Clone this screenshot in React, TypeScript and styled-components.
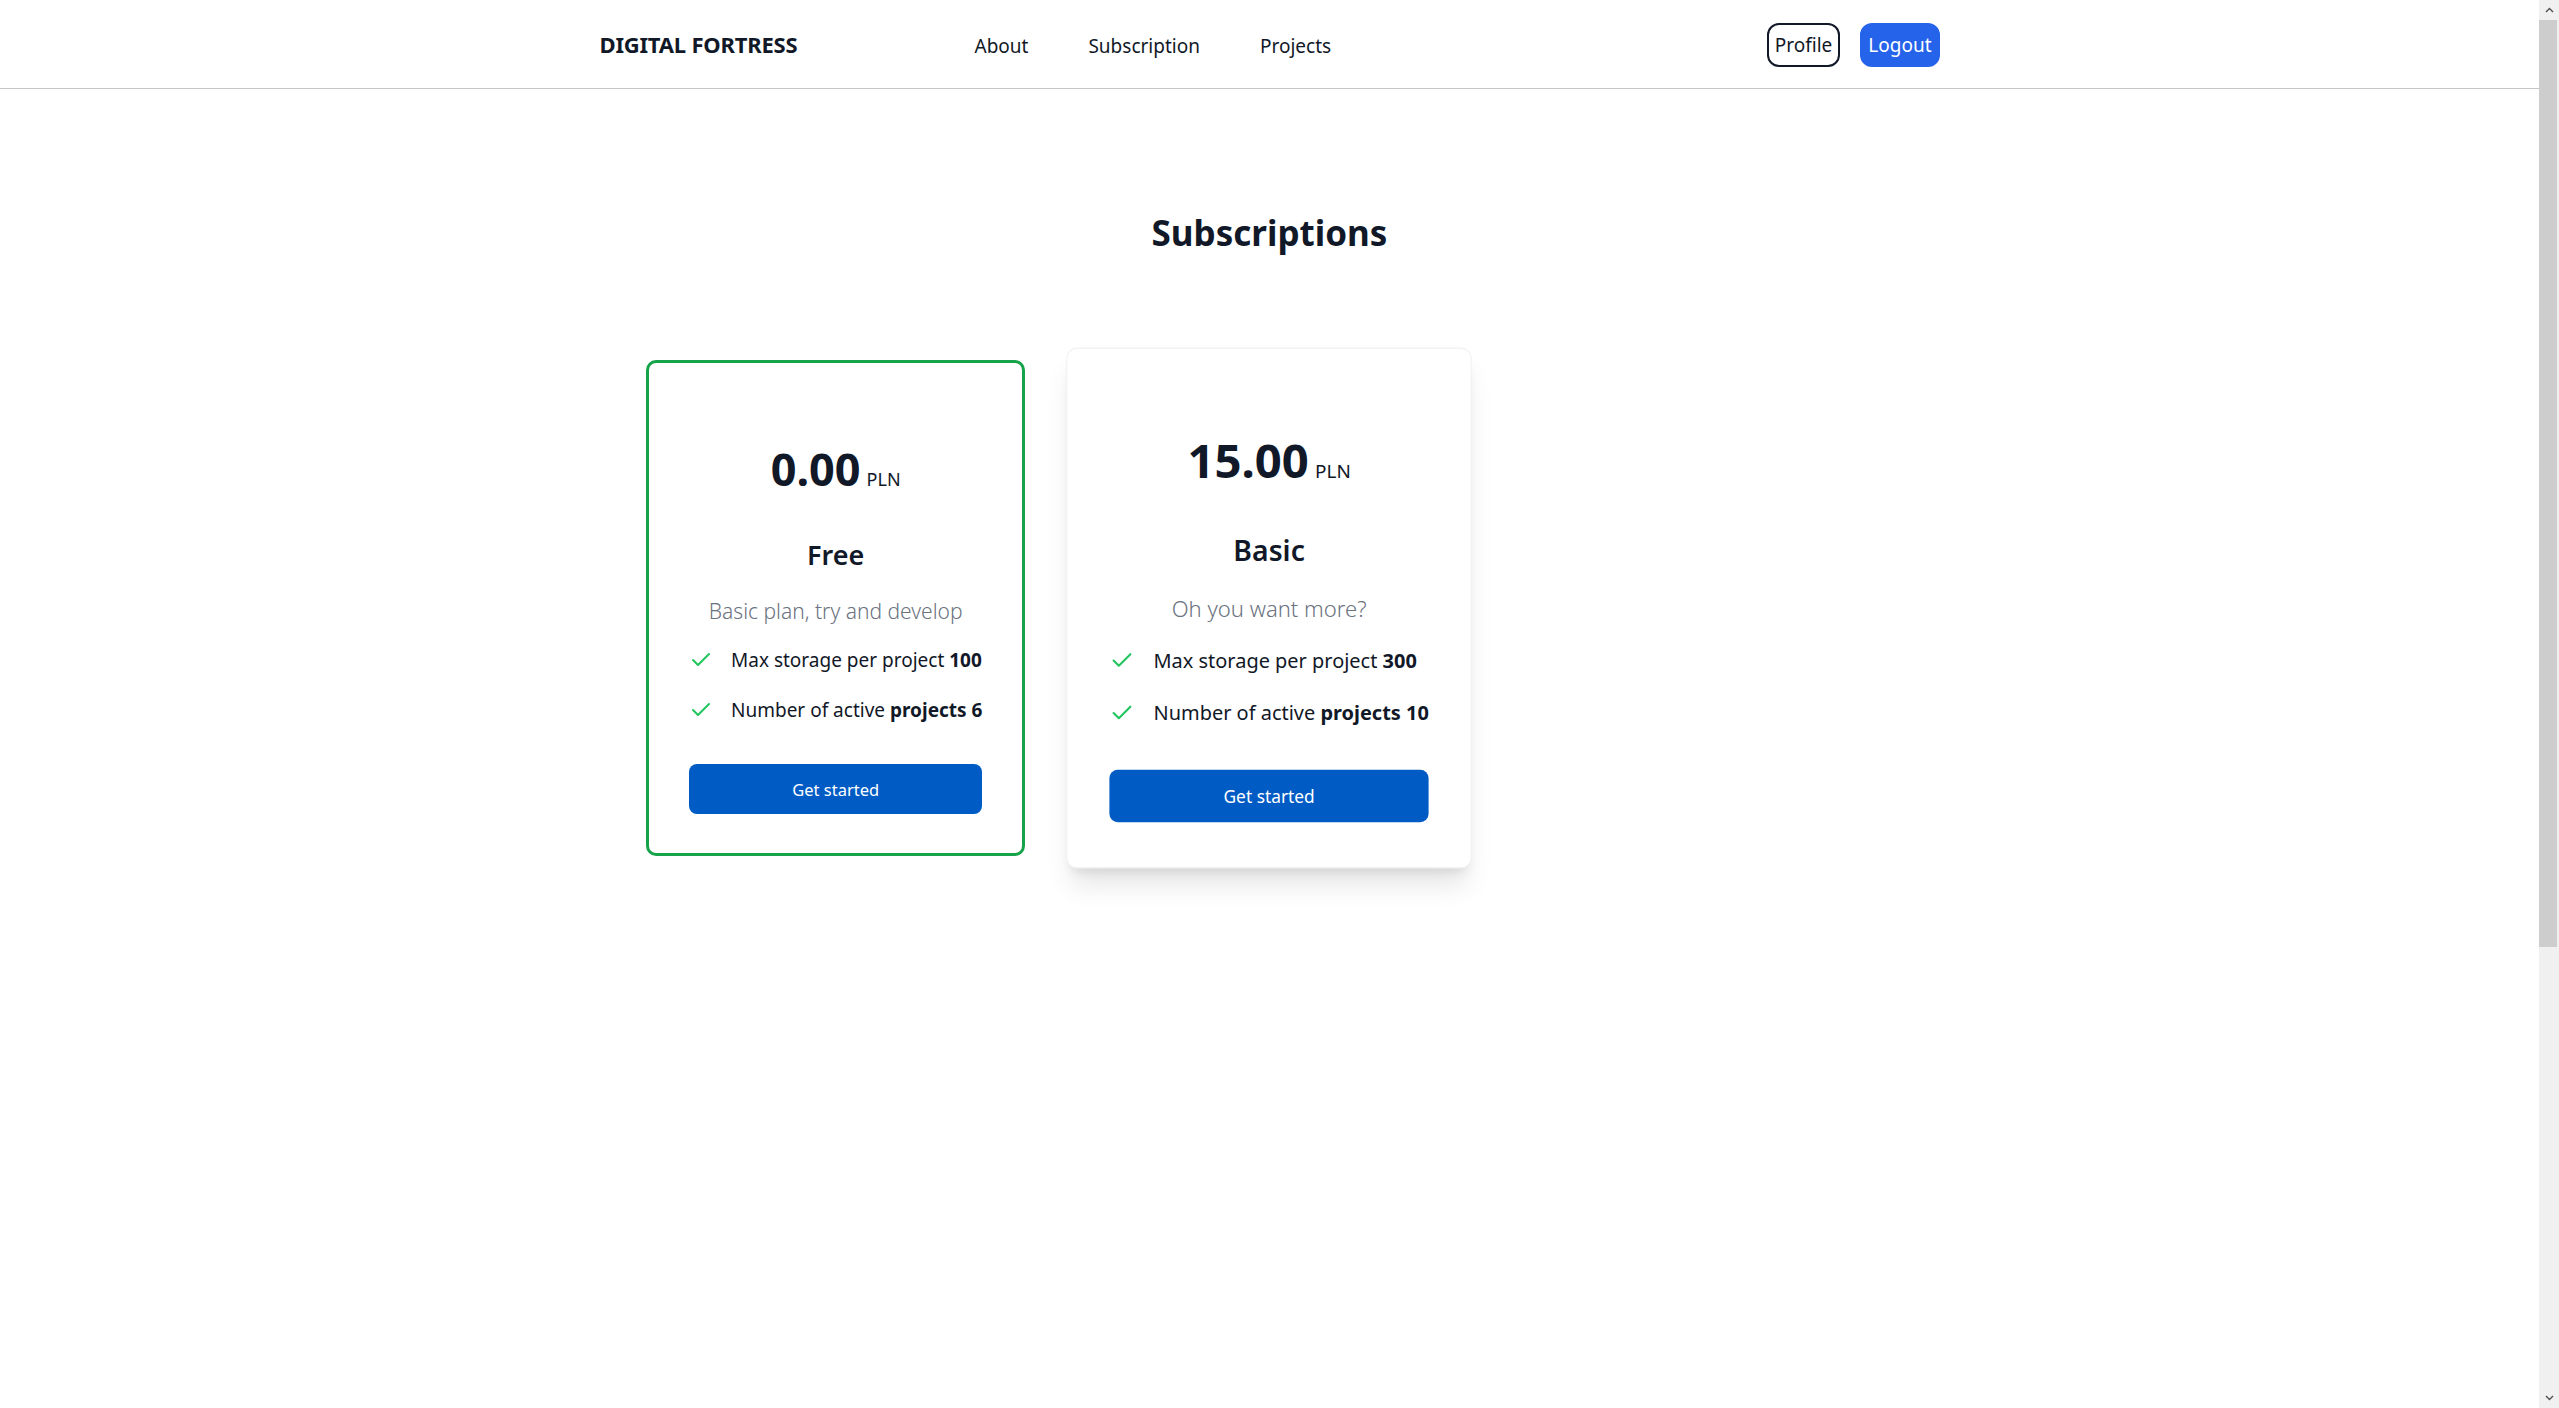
import React from "react";
import styled, { createGlobalStyle, css } from "styled-components";
import { Check } from "lucide-react";

const GlobalStyle = createGlobalStyle`
  html, body {
    margin: 0;
    padding: 0;
    background: #ffffff;
  }
  body {
    font-family: "Noto Sans", "Open Sans", "Liberation Sans", sans-serif;
    color: #111827;
  }
  * { box-sizing: border-box; }
`;

const Page = styled.div`
  min-height: 2077px;
  padding-right: 20px;
  display: flex;
  flex-direction: column;
`;

const ScrollTrack = styled.div`
  position: fixed;
  top: 0;
  right: 0;
  bottom: 0;
  width: 20px;
  background: #f0f0f0;
  display: flex;
  flex-direction: column;
  z-index: 10;
`;

const ScrollArrow = styled.div`
  flex: 0 0 20px;
  display: flex;
  align-items: center;
  justify-content: center;
  color: #505050;
`;

const ScrollThumb = styled.div`
  flex: 0 0 927px;
  margin: 0 2px 0 0;
  background: #cdcdcd;
`;

const ScrollRest = styled.div`
  flex: 1;
`;

const Header = styled.header`
  height: 89px;
  border-bottom: 1px solid #c6c6c6;
  display: flex;
  justify-content: center;
`;

const HeaderInner = styled.div`
  width: 1340px;
  display: flex;
  align-items: center;
`;

const Brand = styled.a`
  flex: 0 0 375px;
  font-size: 22px;
  font-weight: 700;
  color: #111827;
  text-decoration: none;
  letter-spacing: -0.2px;
`;

const NavLinks = styled.nav`
  display: flex;
  gap: 60px;
  padding-top: 3px;
`;

const NavLink = styled.a`
  font-size: 19px;
  color: #111827;
  text-decoration: none;
`;

const Actions = styled.div`
  margin-left: auto;
  display: flex;
  gap: 20px;
  padding-top: 1px;
`;

const PillButton = styled.button<{ $variant: "outline" | "solid" }>`
  height: 44px;
  padding: 0 6px;
  border-radius: 12px;
  font-family: inherit;
  font-size: 19px;
  cursor: pointer;
  ${({ $variant }) =>
    $variant === "outline"
      ? css`
          background: #ffffff;
          color: #111827;
          border: 2px solid #111827;
        `
      : css`
          background: #2563eb;
          color: #ffffff;
          border: 2px solid #2563eb;
        `}
`;

const Main = styled.main`
  padding-top: 127px;
  display: flex;
  flex-direction: column;
  align-items: center;
`;

const Title = styled.h1`
  margin: 0;
  font-size: 35px;
  line-height: 34px;
  font-weight: 700;
  color: #111827;
`;

const PlanGrid = styled.div`
  margin-top: 110px;
  width: 100%;
  display: grid;
  grid-template-columns: 1fr auto 1fr;
  column-gap: 51px;
`;

const Card = styled.div<{ $current?: boolean; $featured?: boolean; $column: number }>`
  grid-column: ${({ $column }) => $column};
  justify-self: ${({ $column }) => ($column === 1 ? "end" : "start")};
  display: flex;
  flex-direction: column;
  align-items: center;
  padding: 84px 40px 39px;
  border-radius: 10px;
  background: #ffffff;
  ${({ $current }) =>
    $current &&
    css`
      border: 3px solid #16a34a;
    `}
  ${({ $featured }) =>
    $featured &&
    css`
      border: 1px solid #f1f1f3;
      box-shadow: 0 20px 25px -5px rgba(0, 0, 0, 0.1), 0 8px 10px -6px rgba(0, 0, 0, 0.1);
      transform: scale(1.05);
    `}
`;

const PriceRow = styled.div`
  display: flex;
  align-items: baseline;
`;

const Amount = styled.span`
  font-size: 45px;
  line-height: 44px;
  font-weight: 700;
  color: #111827;
`;

const Currency = styled.span`
  margin-left: 6px;
  font-size: 18px;
  line-height: 18px;
  color: #111827;
`;

const PlanName = styled.h2`
  margin: 50px 0 0;
  font-size: 27px;
  line-height: 27px;
  font-weight: 600;
  color: #111827;
`;

const Tagline = styled.p`
  margin: 34px 0 0;
  font-size: 21px;
  line-height: 19px;
  font-weight: 300;
  color: #6b7280;
`;

const FeatureList = styled.ul`
  list-style: none;
  margin: 27px 0 0;
  padding: 0;
  align-self: stretch;
  display: flex;
  flex-direction: column;
  gap: 26px;
`;

const Feature = styled.li`
  display: flex;
  align-items: center;
  gap: 18px;
  font-size: 19px;
  line-height: 19px;
  white-space: nowrap;
  color: #111827;

  svg {
    flex-shrink: 0;
    color: #22c55e;
  }

  strong {
    font-weight: 700;
  }
`;

const CtaButton = styled.button`
  margin-top: 42px;
  align-self: stretch;
  height: 50px;
  border: none;
  border-radius: 8px;
  background: #005bc4;
  color: #ffffff;
  font-family: inherit;
  font-size: 16.5px;
  cursor: pointer;
`;

type Plan = {
  price: string;
  name: string;
  tagline: string;
  storage: string;
  projects: string;
  current?: boolean;
  featured?: boolean;
};

const plans: Plan[] = [
  {
    price: "0.00",
    name: "Free",
    tagline: "Basic plan, try and develop",
    storage: "100",
    projects: "6",
    current: true,
  },
  {
    price: "15.00",
    name: "Basic",
    tagline: "Oh you want more?",
    storage: "300",
    projects: "10",
    featured: true,
  },
];

function Chevron({ up }: { up: boolean }) {
  return (
    <svg width="9" height="6" viewBox="0 0 9 6" aria-hidden="true">
      <polyline
        points={up ? "1,5 4.5,1.5 8,5" : "1,1 4.5,4.5 8,1"}
        fill="none"
        stroke="currentColor"
        strokeWidth="1.4"
      />
    </svg>
  );
}

export default function App() {
  return (
    <>
      <GlobalStyle />
      <ScrollTrack aria-hidden="true">
        <ScrollArrow>
          <Chevron up />
        </ScrollArrow>
        <ScrollThumb />
        <ScrollRest />
        <ScrollArrow>
          <Chevron up={false} />
        </ScrollArrow>
      </ScrollTrack>
      <Page>
        <Header>
          <HeaderInner>
            <Brand href="#">DIGITAL FORTRESS</Brand>
            <NavLinks>
              <NavLink href="#">About</NavLink>
              <NavLink href="#">Subscription</NavLink>
              <NavLink href="#">Projects</NavLink>
            </NavLinks>
            <Actions>
              <PillButton $variant="outline">Profile</PillButton>
              <PillButton $variant="solid">Logout</PillButton>
            </Actions>
          </HeaderInner>
        </Header>
        <Main>
          <Title>Subscriptions</Title>
          <PlanGrid>
            {plans.map((plan, i) => (
              <Card key={plan.name} $column={i + 1} $current={plan.current} $featured={plan.featured}>
                <PriceRow>
                  <Amount>{plan.price}</Amount>
                  <Currency>PLN</Currency>
                </PriceRow>
                <PlanName>{plan.name}</PlanName>
                <Tagline>{plan.tagline}</Tagline>
                <FeatureList>
                  <Feature>
                    <Check size={24} strokeWidth={2} />
                    <span>
                      Max storage per project <strong>{plan.storage}</strong>
                    </span>
                  </Feature>
                  <Feature>
                    <Check size={24} strokeWidth={2} />
                    <span>
                      Number of active <strong>projects {plan.projects}</strong>
                    </span>
                  </Feature>
                </FeatureList>
                <CtaButton>Get started</CtaButton>
              </Card>
            ))}
          </PlanGrid>
        </Main>
      </Page>
    </>
  );
}
